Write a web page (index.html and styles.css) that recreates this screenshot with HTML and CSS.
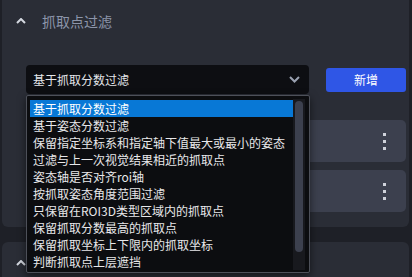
FILE: index.html
```html
<!DOCTYPE html>
<html lang="zh-CN">
<head>
    <meta charset="UTF-8">
    <meta name="viewport" content="width=device-width, initial-scale=1.0">
    <title>抓取点过滤</title>
    <link rel="stylesheet" href="styles.css">
</head>
<body>
    <div class="page">
        <section class="panel">
            <div class="panel-header">
                <svg class="chevron" width="10" height="6" viewBox="0 0 10 6"><path d="M1 5 L5 1 L9 5" fill="none" stroke="#d4d8e0" stroke-width="2"/></svg>
                <span class="panel-title">抓取点过滤</span>
            </div>
            <div class="panel-body">
                <div class="filter-row">
                    <div class="select-wrap">
                        <div class="select">
                            <span>基于抓取分数过滤</span>
                            <svg width="11" height="7" viewBox="0 0 11 7"><path d="M1 1 L5.5 5.5 L10 1" fill="none" stroke="#9aa1b0" stroke-width="2"/></svg>
                        </div>
                        <div class="dropdown">
                            <div class="options">
                                <div class="option selected">基于抓取分数过滤</div>
                                <div class="option">基于姿态分数过滤</div>
                                <div class="option">保留指定坐标系和指定轴下值最大或最小的姿态</div>
                                <div class="option">过滤与上一次视觉结果相近的抓取点</div>
                                <div class="option">姿态轴是否对齐roi轴</div>
                                <div class="option">按抓取姿态角度范围过滤</div>
                                <div class="option">只保留在ROI3D类型区域内的抓取点</div>
                                <div class="option">保留抓取分数最高的抓取点</div>
                                <div class="option">保留抓取坐标上下限内的抓取坐标</div>
                                <div class="option">判断抓取点上层遮挡</div>
                            </div>
                            <div class="scrollbar"><div class="thumb"></div></div>
                        </div>
                    </div>
                    <button class="btn-add">新增</button>
                </div>
                <div class="card">
                    <div class="kebab"><i></i><i></i><i></i></div>
                </div>
                <div class="card">
                    <div class="kebab"><i></i><i></i><i></i></div>
                </div>
            </div>
        </section>
        <section class="panel">
            <div class="panel-header">
                <svg class="chevron" width="10" height="6" viewBox="0 0 10 6"><path d="M1 5 L5 1 L9 5" fill="none" stroke="#d4d8e0" stroke-width="2"/></svg>
            </div>
        </section>
    </div>
</body>
</html>
```

FILE: styles.css
```css
html, body {
    margin: 0;
    padding: 0;
    background-color: #1e2027;
    font-family: "Noto Sans CJK SC", "Noto Sans", sans-serif;
    overflow: hidden;
}
.page {
    padding: 0 3px 0 2px;
}
.panel {
    background-color: #2a2d36;
    border-radius: 0 0 6px 6px;
}
.panel + .panel {
    margin-top: 15px;
    border-radius: 6px 6px 0 0;
    height: 35px;
    overflow: hidden;
}
.panel-header {
    display: flex;
    align-items: center;
    height: 41px;
    padding-left: 14px;
}
.chevron {
    display: block;
}
.panel-title {
    margin-left: 16px;
    font-size: 14px;
    color: #8c95aa;
}
.panel-body {
    padding: 24px 3px 15px 24px;
}
.filter-row {
    display: flex;
    align-items: center;
    gap: 17px;
}
.select-wrap {
    position: relative;
    width: 283px;
}
.select {
    display: flex;
    align-items: center;
    justify-content: space-between;
    height: 29px;
    padding: 0 9px 0 7px;
    background-color: #0d0e12;
    border-radius: 4px;
    color: #e4e6ea;
    font-size: 12px;
}
.dropdown {
    position: absolute;
    top: 30px;
    left: 0;
    width: 284px;
    height: 178px;
    box-sizing: border-box;
    display: flex;
    padding: 3px 4px 2px 3px;
    background-color: #0c0d10;
    border: 1px solid #4d5059;
    border-radius: 2px;
    box-shadow: 0 3px 8px rgba(0, 0, 0, 0.55);
    z-index: 2;
}
.options {
    flex: 1;
    overflow: hidden;
    padding-top: 1px;
}
.option {
    height: 17px;
    line-height: 17px;
    padding-left: 3px;
    font-size: 12px;
    color: #e8e8ea;
    white-space: nowrap;
}
.option.selected {
    background-color: #0878d6;
    color: #ffffff;
}
.scrollbar {
    width: 12px;
    height: 171px;
    background-color: #18191e;
    padding: 2px 2px 0 2px;
    box-sizing: border-box;
}
.thumb {
    height: 151px;
    border-radius: 4px;
    background-color: #3c404e;
}
.btn-add {
    width: 80px;
    height: 24px;
    border: none;
    border-radius: 3px;
    background-color: #2f56e6;
    color: #ffffff;
    font-family: inherit;
    font-size: 12px;
    cursor: pointer;
}
.card {
    display: flex;
    align-items: center;
    justify-content: flex-end;
    height: 42px;
    margin-top: 8px;
    padding-right: 20px;
    background-color: #3c404e;
    border-radius: 5px;
}
.filter-row + .card {
    margin-top: 26px;
}
.kebab {
    display: flex;
    flex-direction: column;
    gap: 4px;
}
.kebab i {
    display: block;
    width: 3px;
    height: 3px;
    background-color: #cfd2da;
}
```
